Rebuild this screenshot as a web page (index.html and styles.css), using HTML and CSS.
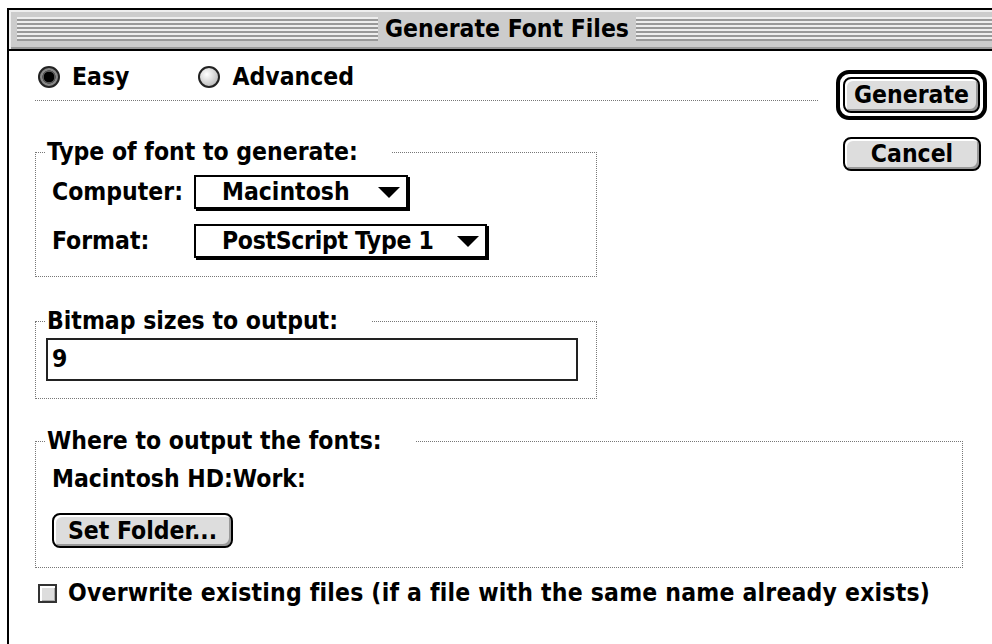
FILE: index.html
```html
<!DOCTYPE html>
<html lang="en">
<head>
<meta charset="utf-8">
<title>Generate Font Files</title>
<link rel="stylesheet" href="styles.css">
</head>
<body>
<div class="window">
  <div class="titlebar">
    <div class="stripes"></div>
    <div class="title">Generate Font Files</div>
    <div class="stripes"></div>
  </div>
  <div class="content">
    <div class="top">
      <div class="main-col">
        <div class="mode-row">
          <label class="radio radio-easy"><span class="radio-dot is-on"></span>Easy</label>
          <label class="radio"><span class="radio-dot"></span>Advanced</label>
        </div>
        <div class="separator"></div>
        <fieldset class="group group-type">
          <legend>Type of font to generate:</legend>
          <div class="field-row">
            <span class="field-label">Computer:</span>
            <span class="popup popup-computer"><span>Macintosh</span><span class="arrow"></span></span>
          </div>
          <div class="field-row field-row-second">
            <span class="field-label">Format:</span>
            <span class="popup popup-format"><span>PostScript Type 1</span><span class="arrow"></span></span>
          </div>
        </fieldset>
        <fieldset class="group group-sizes">
          <legend>Bitmap sizes to output:</legend>
          <div class="textfield">9</div>
        </fieldset>
      </div>
      <div class="button-col">
        <div class="default-ring"><button class="btn btn-default">Generate</button></div>
        <button class="btn btn-cancel">Cancel</button>
      </div>
    </div>
    <fieldset class="group group-dest">
      <legend>Where to output the fonts:</legend>
      <div class="path">Macintosh HD:Work:</div>
      <button class="btn btn-folder">Set Folder...</button>
    </fieldset>
    <label class="check"><span class="checkbox"></span>Overwrite existing files (if a file with the same name already exists)</label>
  </div>
</div>
</body>
</html>
```

FILE: styles.css
```css
* {
  box-sizing: border-box;
}

html, body {
  margin: 0;
  height: 644px;
  overflow: hidden;
  background: #fff;
}

body {
  font-family: "DejaVu Sans Condensed", "DejaVu Sans", sans-serif;
  font-weight: bold;
  font-size: 24.5px;
  line-height: 26px;
  color: #000;
}

/* window frame */
.window {
  margin: 8px 0 0 7px;
  width: 998px;
  height: 636px;
  border-left: 2px solid #000;
  border-top: 2px solid #000;
  background: #fff;
}

.titlebar {
  height: 41px;
  display: flex;
  align-items: center;
  padding: 0 8px 2px;
  background: #cccccc;
  border-bottom: 2px solid #000;
  box-shadow: inset 2px 2px 0 #eeeeee, inset 0 -2px 0 #999999;
}

.stripes {
  flex: 1;
  height: 24px;
  background: repeating-linear-gradient(to bottom, #eeeeee 0 2px, #999999 2px 4px);
}

.title {
  padding: 0 7px;
  white-space: nowrap;
}

.content {
  padding-left: 26px;
}

.top {
  display: flex;
}

.main-col {
  width: 783px;
}

/* Easy / Advanced radios */
.mode-row {
  display: flex;
  padding: 13px 0 0 3px;
}

.radio {
  display: flex;
  align-items: center;
  gap: 12px;
}

.radio-easy {
  margin-right: 69px;
}

.radio-dot {
  width: 22px;
  height: 22px;
  border-radius: 50%;
  border: 2px solid #222;
  background: radial-gradient(circle at 38% 35%, #ffffff 0, #e2e2e2 35%, #a8a8a8 100%);
}

.radio-dot.is-on {
  background: radial-gradient(circle, #000 0 5px, #555 5.5px 6.5px, #888 7px 100%);
}

.separator {
  margin-top: 10px;
  border-top: 1px dotted #777;
}

/* dotted group boxes */
.group {
  margin: 0;
  padding: 0 18px 18px 10px;
  border: 1px dotted #777;
  min-width: 0;
}

.group legend {
  padding: 0 34px 0 1px;
  margin: 0;
}

.group-type {
  width: 562px;
  margin-top: 38px;
}

.group-sizes {
  width: 562px;
  margin-top: 31px;
  padding-bottom: 17px;
}

.group-dest {
  width: 928px;
  margin-top: 29px;
  padding-bottom: 19px;
}

.field-row {
  display: flex;
  align-items: center;
  margin-top: 10px;
  padding-left: 6px;
}

.field-row-second {
  margin-top: 15px;
}

.field-label {
  width: 142px;
}

.popup {
  height: 34px;
  display: flex;
  align-items: center;
  justify-content: space-between;
  padding: 0 6px 0 26px;
  border: 2px solid #000;
  box-shadow: 2px 2px 0 #000;
  background: #fff;
}

.popup-computer {
  width: 214px;
}

.popup-format {
  width: 293px;
  letter-spacing: -0.3px;
}

.arrow {
  width: 0;
  height: 0;
  border-left: 11px solid transparent;
  border-right: 11px solid transparent;
  border-top: 11px solid #000;
}

.textfield {
  margin-top: 4px;
  width: 532px;
  height: 43px;
  border: 2px solid #222;
  padding: 6px 4px;
}

.path {
  margin-top: 12px;
  padding-left: 6px;
}

/* push buttons */
.btn {
  font: inherit;
  color: #000;
  display: flex;
  align-items: center;
  justify-content: center;
  padding: 0;
  border: 2px solid #000;
  border-radius: 8px;
  background: #dddddd;
  box-shadow: inset 2px 2px 0 #ffffff, inset -2px -2px 0 #999999;
}

.button-col {
  margin-left: 18px;
}

.default-ring {
  margin-top: 19px;
  width: 151px;
  height: 50px;
  padding: 3px;
  border: 4px solid #000;
  border-radius: 13px;
}

.btn-default {
  width: 100%;
  height: 100%;
}

.btn-cancel {
  margin: 17px 0 0 7px;
  width: 138px;
  height: 34px;
}

.btn-folder {
  margin: 21px 0 0 6px;
  width: 181px;
  height: 35px;
}

/* overwrite checkbox */
.check {
  display: flex;
  align-items: center;
  gap: 11px;
  margin-top: 12px;
  padding-left: 3px;
  letter-spacing: 0.2px;
}

.checkbox {
  width: 19px;
  height: 19px;
  border: 2px solid #333;
  background: #dddddd;
  box-shadow: inset 2px 2px 0 #ffffff, inset -1px -1px 0 #aaaaaa;
}
```
